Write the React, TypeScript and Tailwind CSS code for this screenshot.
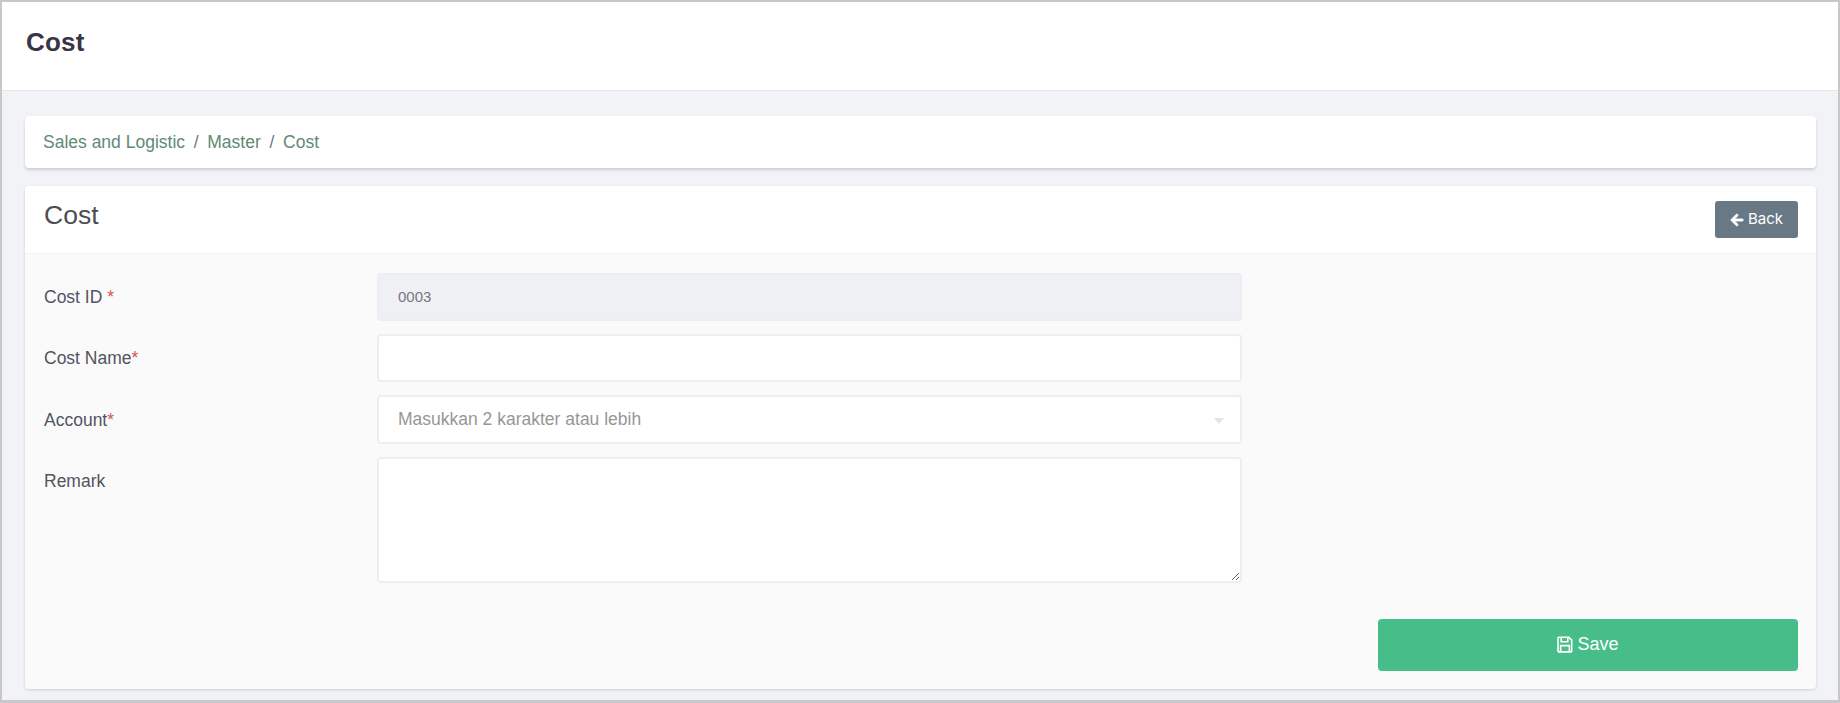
import { FaArrowLeft } from 'react-icons/fa';

const fieldLabel = 'w-[334px] shrink-0 pl-[1px] text-[17.5px] leading-[24px] text-[#54545f]';
const fieldBox = 'w-[865px] rounded-[4px] border-2 border-[#eceef1] bg-white';

function SaveIcon() {
  return (
    <svg width="16" height="17" viewBox="0 0 16 17" fill="none" stroke="currentColor" strokeWidth="1.6">
      <path d="M1.8 1.3h10l2.9 2.9v10.9a.8.8 0 0 1-.8.8H1.8a.8.8 0 0 1-.8-.8V2.1a.8.8 0 0 1 .8-.8z" />
      <path d="M4.2 1.5v4.3h6.6V1.5" />
      <path d="M3.6 15.7V9.6h8.8v6.1" />
    </svg>
  );
}

export default function App() {
  return (
    <div className="h-[703px] w-[1840px] overflow-hidden border-2 border-b-[3px] border-[#c8c8c8] bg-[#f1f3f7] font-['Liberation_Sans',Arial,sans-serif]">
      <header className="flex h-[89px] items-center border-b border-[#e4e6ea] bg-white pb-[8px] pl-[24px]">
        <h1 className="text-[26px] font-bold tracking-[0.2px] text-[#3a3545]">Cost</h1>
      </header>

      <div className="flex flex-col gap-[18px] pr-[22px] pl-[23px] pt-[25px]">
        <nav className="flex h-[52px] items-center gap-[8.7px] rounded-[4px] bg-white pl-[18px] text-[17.5px] text-[#5f8a76] shadow-[0_2px_3px_rgba(60,70,90,0.2)]">
          <span>Sales and Logistic</span>
          <span className="text-[#6f7780]">/</span>
          <span>Master</span>
          <span className="text-[#6f7780]">/</span>
          <span>Cost</span>
        </nav>

        <section className="flex h-[503px] flex-col rounded-[4px] bg-[#fafafb] shadow-[0_1px_3px_rgba(60,70,90,0.2)]">
          <div className="flex h-[68px] items-start justify-between rounded-t-[4px] border-b border-[#f0f1f3] bg-white pr-[18px] pl-[19px]">
            <h2 className="pt-[13px] text-[26.5px] leading-[32px] text-[#4d4d53]">Cost</h2>
            <button className="mt-[15px] flex h-[37px] w-[83px] items-center justify-center gap-[4px] rounded-[3px] bg-[#687885] font-['Inter',sans-serif] text-[15px] text-white">
              <FaArrowLeft className="text-[14px]" stroke="currentColor" strokeWidth={30} />
              Back
            </button>
          </div>

          <div className="flex flex-col gap-[13px] px-[18px] pt-[19px]">
            <div className="flex items-center">
              <label className={fieldLabel}>
                Cost ID <span className="text-[#d9534f]">*</span>
              </label>
              <div className="flex h-[48px] w-[865px] items-center rounded-[4px] border-2 border-[#eceef1] bg-[#eff0f4] pl-[19px] text-[15px] text-[#77777f]">
                0003
              </div>
            </div>
            <div className="flex items-center">
              <label className={fieldLabel}>
                Cost Name<span className="text-[#d9534f]">*</span>
              </label>
              <input className={`${fieldBox} h-[48px]`} />
            </div>
            <div className="flex items-center">
              <label className={fieldLabel}>
                Account<span className="text-[#d9534f]">*</span>
              </label>
              <div className={`${fieldBox} flex h-[49px] items-center justify-between pr-[16px] pl-[19px] text-[17.5px] text-[#979797]`}>
                <span>Masukkan 2 karakter atau lebih</span>
                <span className="mt-[2px] h-0 w-0 border-x-[5px] border-t-[6px] border-x-transparent border-t-[#e3e4e6]" />
              </div>
            </div>
            <div className="flex items-start">
              <label className={`${fieldLabel} pt-[12px]`}>Remark</label>
              <textarea className={`${fieldBox} h-[126px]`} />
            </div>
          </div>

          <div className="flex justify-end pt-[36px] pr-[18px]">
            <button className="flex h-[52px] w-[420px] items-center justify-center gap-[4px] rounded-[4px] bg-[#47be8a] pb-[2px] text-[18px] text-white">
              <SaveIcon />
              Save
            </button>
          </div>
        </section>
      </div>
    </div>
  );
}
